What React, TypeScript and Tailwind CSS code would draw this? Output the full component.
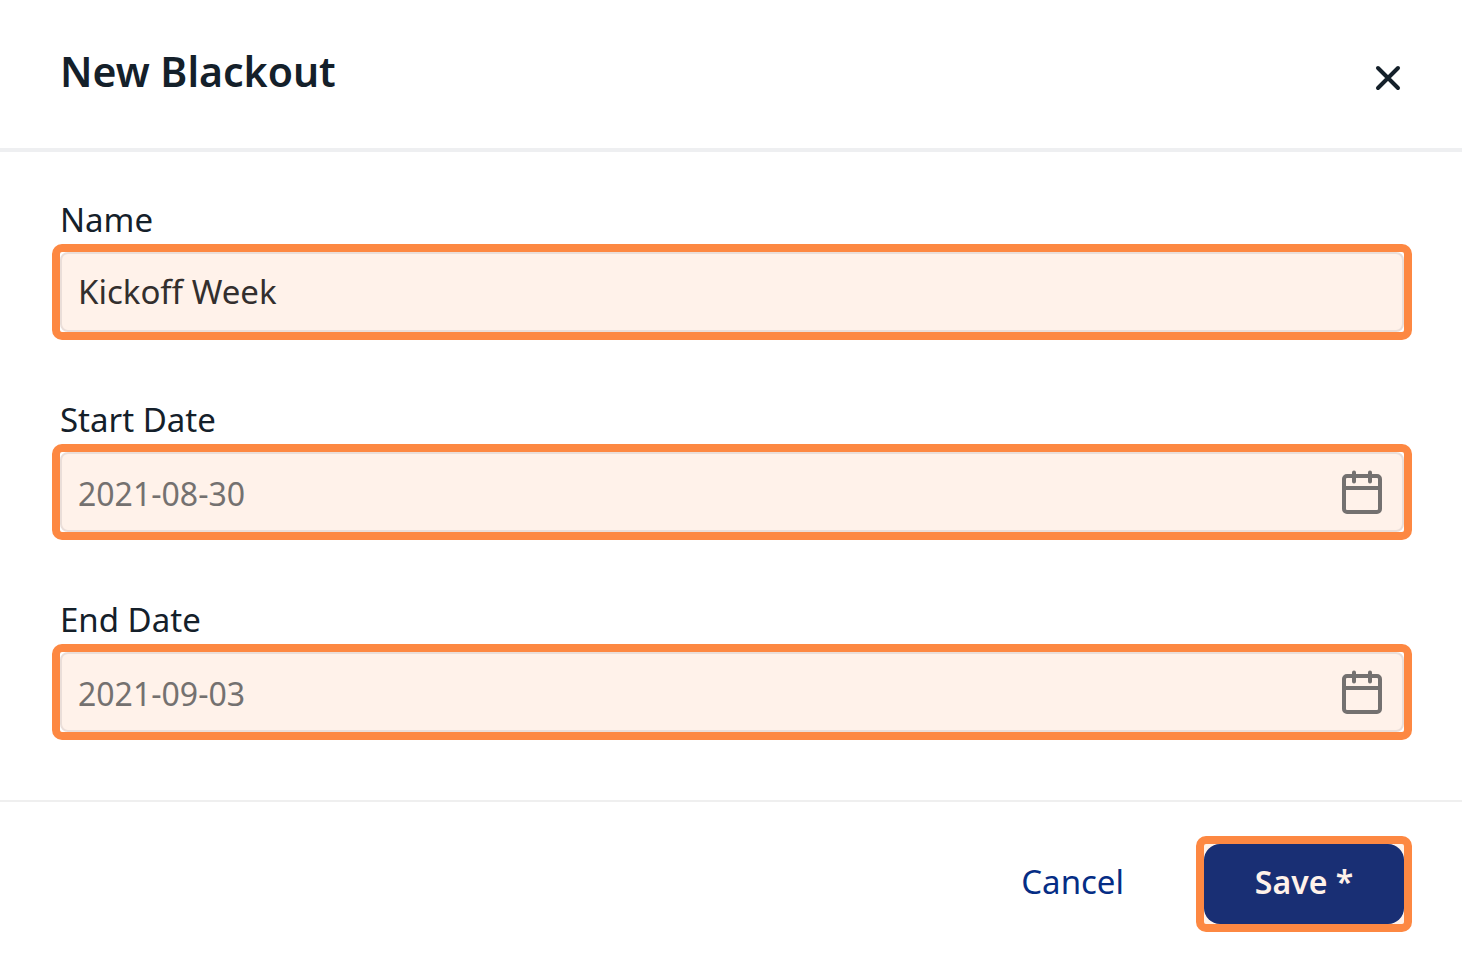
import { useState } from 'react';

interface FieldProps {
  id: string;
  label: string;
  value: string;
  onChange: (value: string) => void;
  isDate?: boolean;
}

function CalendarIcon() {
  return (
    <svg width="48" height="48" viewBox="0 0 48 48" fill="none" stroke="#747170" strokeWidth="4" aria-hidden="true">
      <rect x="6" y="8" width="36" height="36" rx="3" />
      <path d="M6 20h36" />
      <path d="M16 4.5v9M32 4.5v9" strokeLinecap="round" />
    </svg>
  );
}

function Field({ id, label, value, onChange, isDate = false }: FieldProps) {
  return (
    <div>
      <label htmlFor={id} className="block pl-2 text-[33px] leading-12 text-[#14202a]">
        {label}
      </label>
      {/* Highlighted frame around the input */}
      <div className="rounded-[10px] border-8 border-[#fd8842] bg-white">
        <div className="flex h-20 items-center rounded-lg border-2 border-[#eaded9] bg-[#fff2ea] pr-4">
          <input
            id={id}
            type="text"
            value={value}
            onChange={(e) => onChange(e.target.value)}
            className={`h-full min-w-0 flex-1 bg-transparent pl-4 outline-none ${
              isDate ? 'pt-0.5 text-[32px] text-[#747170]' : 'pb-0.5 text-[33px] text-[#332f2e]'
            }`}
          />
          {isDate && (
            <button type="button" aria-label={`Pick ${label}`}>
              <CalendarIcon />
            </button>
          )}
        </div>
      </div>
    </div>
  );
}

export default function App() {
  const [name, setName] = useState('Kickoff Week');
  const [startDate, setStartDate] = useState('2021-08-30');
  const [endDate, setEndDate] = useState('2021-09-03');

  return (
    <form
      onSubmit={(e) => e.preventDefault()}
      className="flex min-h-screen w-full flex-col bg-white font-['Noto_Sans',sans-serif]"
    >
      <header className="flex items-start justify-between border-b-4 border-[#eeeff1] pt-[42px] pr-[58px] pb-[34px] pl-[60px]">
        <h1 className="text-[41px] leading-[58px] font-semibold text-[#14202a]">New Blackout</h1>
        <button type="button" aria-label="Close" className="flex h-[72px] items-center">
          <svg width="32" height="32" viewBox="0 0 32 32" fill="none" stroke="#14202a" strokeWidth="4" strokeLinecap="round" aria-hidden="true">
            <path d="M6 6l20 20M26 6l-20 20" />
          </svg>
        </button>
      </header>

      <main className="flex flex-col gap-14 pt-11 pr-[50px] pb-15 pl-[52px]">
        <Field id="name" label="Name" value={name} onChange={setName} />
        <Field id="start-date" label="Start Date" value={startDate} onChange={setStartDate} isDate />
        <Field id="end-date" label="End Date" value={endDate} onChange={setEndDate} isDate />
      </main>

      <footer className="flex items-center justify-end gap-[72px] border-t-2 border-[#efefef] pt-[34px] pr-[50px] pb-7">
        <button type="button" className="h-20 pb-1 text-[33px] text-[#052d85]">
          Cancel
        </button>
        <div className="rounded-[10px] border-8 border-[#fd8842] bg-[#fff2ea]">
          <button
            type="submit"
            className="h-20 w-[200px] rounded-2xl bg-[#192f74] pb-1 text-[32px] font-semibold text-[#fff2ea]"
          >
            Save *
          </button>
        </div>
      </footer>
    </form>
  );
}
